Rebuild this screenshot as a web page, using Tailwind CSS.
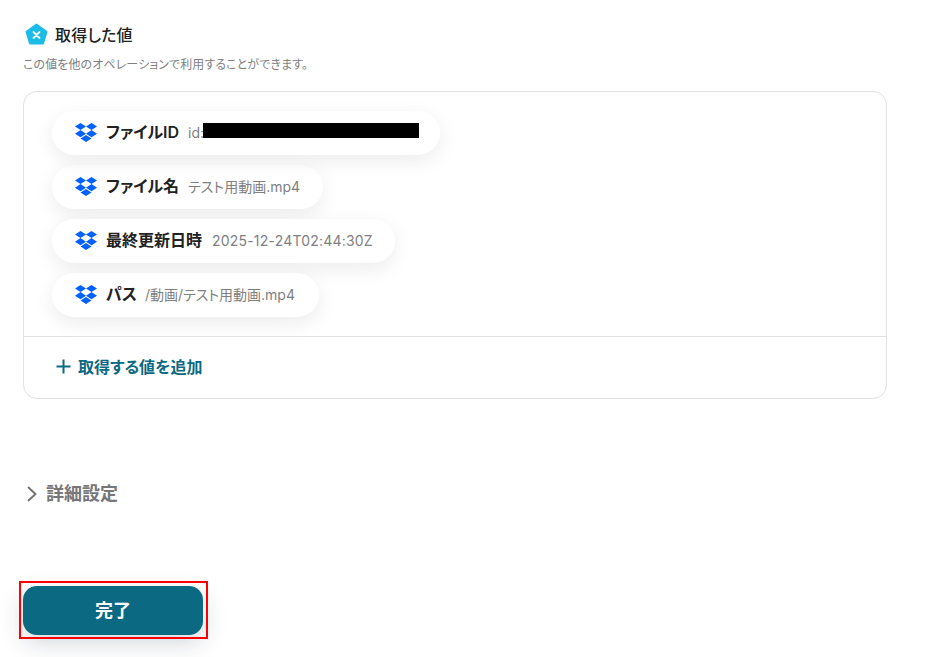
<!DOCTYPE html>
<html lang="ja">
<head>
<meta charset="utf-8">
<script src="https://cdn.jsdelivr.net/npm/@tailwindcss/browser@4"></script>
</head>
<body class="bg-white font-['Inter','Noto_Sans_CJK_JP',sans-serif] [font-feature-settings:'palt'] overflow-hidden">
<svg width="0" height="0" class="absolute">
  <symbol id="db" viewBox="0 0 24 22">
    <path fill="#0061ff" d="M6 0 0 3.9l6 3.9-6 3.9 6 3.9 6-3.9 6 3.9 6-3.9-6-3.9 6-3.9L18 0l-6 3.9L6 0Zm6 3.9 6 3.9-6 3.9-6-3.9 6-3.9ZM6 17l6 3.9 6-3.9-6-3.9L6 17Z"/>
  </symbol>
</svg>
<div class="w-[929px] h-[657px] pl-[23px] pt-[22px] flex flex-col">
  <div class="flex items-center h-[25px] pl-[2px] gap-[7px]">
    <svg width="23" height="23" viewBox="0 0 23 23">
      <path fill="#1bbde8" stroke="#1bbde8" stroke-width="2" stroke-linejoin="round" d="M11.5 1.5 21.5 8.7 18 20.5H5L1.5 8.7Z"/>
      <path fill="none" stroke="#fff" stroke-width="1.8" stroke-linecap="round" d="M8.5 9 14.5 15M14.5 9 8.5 15"/>
    </svg>
    <span class="mt-[1px] text-[16px] tracking-[0.2px] leading-[25px] font-medium text-[#222]">取得した値</span>
  </div>
  <p class="mt-[9px] text-[12px] leading-[18px] text-[#808080] tracking-[0.1px]">この値を他のオペレーションで利用することができます。</p>
  <div class="mt-[17px] w-[864px] h-[308px] border border-[#e2e2e2] rounded-[14px] flex flex-col">
    <div class="h-[244px] pl-[28px] pt-[19px] flex flex-col items-start gap-[10px]">
      <div class="relative h-[44px] w-[388px] rounded-full bg-white shadow-[0_6px_20px_rgba(0,0,0,0.08)] flex items-center pl-[23px] pb-[2px]">
        <svg class="mt-[2px]" width="22" height="22"><use href="#db"/></svg>
        <span class="ml-[9px] text-[16px] font-semibold text-[#222]">ファイルID</span>
        <span class="ml-[9px] text-[14px] text-[#808080]">id:</span>
        <div class="absolute left-[151px] top-[12px] w-[216px] h-[15px] bg-black"></div>
      </div>
      <div class="h-[44px] w-[271px] rounded-full bg-white shadow-[0_6px_20px_rgba(0,0,0,0.08)] flex items-center pl-[23px] pb-[2px]">
        <svg class="mt-[2px]" width="22" height="22"><use href="#db"/></svg>
        <span class="ml-[9px] text-[16px] font-semibold text-[#222]">ファイル名</span>
        <span class="ml-[9px] text-[14px] text-[#808080]">テスト用動画.mp4</span>
      </div>
      <div class="h-[44px] w-[343px] rounded-full bg-white shadow-[0_6px_20px_rgba(0,0,0,0.08)] flex items-center pl-[23px] pb-[2px]">
        <svg class="mt-[2px]" width="22" height="22"><use href="#db"/></svg>
        <span class="ml-[9px] text-[16px] font-semibold text-[#222]">最終更新日時</span>
        <span class="ml-[10px] text-[14px] tracking-[0.2px] text-[#808080]">2025-12-24T02:44:30Z</span>
      </div>
      <div class="h-[44px] w-[267px] rounded-full bg-white shadow-[0_6px_20px_rgba(0,0,0,0.08)] flex items-center pl-[23px] pb-[2px]">
        <svg class="mt-[2px]" width="22" height="22"><use href="#db"/></svg>
        <span class="ml-[9px] text-[16px] font-semibold text-[#222]">パス</span>
        <span class="ml-[8px] text-[14px] text-[#808080]">/動画/テスト用動画.mp4</span>
      </div>
    </div>
    <div class="border-t border-[#e2e2e2] flex-1 flex items-center pl-[32px] gap-[8px] pb-[2px]">
      <svg class="-mt-[1px]" width="15" height="15" viewBox="0 0 15 15"><path stroke="#0b6a82" stroke-width="2" d="M7.5 0.5v14M0.5 7.5h14"/></svg>
      <span class="-ml-[1px] text-[16px] font-semibold text-[#0b6a82]">取得する値を追加</span>
    </div>
  </div>
  <div class="mt-[81px] flex items-center h-[26px] pl-[4px] gap-[9px]">
    <svg class="mt-[2px]" width="10" height="16" viewBox="0 0 10 16"><path fill="none" stroke="#6f6f6f" stroke-width="1.8" d="M1 1l7.5 7L1 15"/></svg>
    <span class="text-[18px] font-semibold text-[#777]">詳細設定</span>
  </div>
  <div class="mt-[80px] relative w-[180px] h-[49px]">
    <button class="w-full h-full rounded-[14px] bg-[#0b6a82] text-white text-[18px] font-semibold shadow-[0_8px_24px_rgba(0,40,60,0.18)]">完了</button>
    <div class="absolute -left-[4px] -top-[5px] w-[189px] h-[58px] border-2 border-[#f00]"></div>
  </div>
</div>
</body>
</html>
